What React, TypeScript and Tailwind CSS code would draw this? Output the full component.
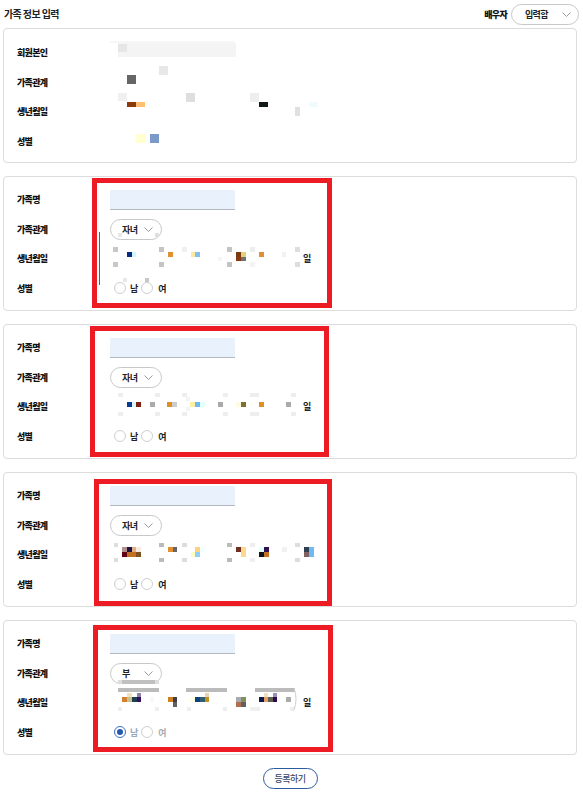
import React from 'react';

type Sq = [number, number, number, number, string];

const FONT = "font-['Noto_Sans_CJK_KR','Noto_Sans',sans-serif]";

const Chevron = () => (
  <svg width="9" height="5" viewBox="0 0 9 5" fill="none">
    <path d="M0.5 0.5 L4.5 4.5 L8.5 0.5" stroke="#9a9a9a" strokeWidth="1" />
  </svg>
);

function Noise({ items, ox, oy }: { items: Sq[]; ox: number; oy: number }) {
  return (
    <>
      {items.map(([x, y, w, h, c], i) => (
        <div
          key={i}
          className="absolute"
          style={{ left: x - ox, top: y - oy, width: w, height: h, background: c }}
        />
      ))}
    </>
  );
}

function Row({ label, children }: { label: string; children?: React.ReactNode }) {
  return (
    <div className="flex h-[29.5px] items-center">
      <div className="w-[93px] text-[9px] font-black leading-none tracking-[-0.7px] text-[#111]">{label}</div>
      <div className="flex flex-1 items-center">{children}</div>
    </div>
  );
}

function Radio({ checked }: { checked?: boolean }) {
  return (
    <div
      className={
        checked
          ? 'flex h-[12px] w-[12px] items-center justify-center rounded-full border border-[#3d6fc0] bg-white'
          : 'h-[12px] w-[12px] rounded-full border border-[#cfcfcf] bg-white'
      }
    >
      {checked && <div className="h-[6px] w-[6px] rounded-full bg-[#2458b0]" />}
    </div>
  );
}

type FamilyProps = {
  top: number;
  rel: string;
  noise: Sq[];
  red: [number, number, number, number];
  showDay: boolean;
  disabledGender?: boolean;
  extra?: React.ReactNode;
};

function FamilyCard({ top, rel, noise, red, showDay, disabledGender, extra }: FamilyProps) {
  const ox = 4;
  const oy = top + 1;
  return (
    <div className="relative h-[135px] w-[574px] rounded-[4px] border border-[#dcdcdc] bg-white">
      <div className="flex flex-col pl-[13px] pt-[8px]">
        <Row label="가족명">
          <div className="h-[20px] w-[125px] border-b border-[#b4b8c0] bg-[#e8f1fc]" />
        </Row>
        <Row label="가족관계">
          <div className="flex h-[21px] w-[52px] items-center justify-between rounded-full border border-[#c8c8c8] pl-[11px] pr-[8px]">
            <span className="text-[9px] font-bold leading-none tracking-[-0.5px] text-[#222]">{rel}</span>
            <Chevron />
          </div>
        </Row>
        <Row label="생년월일">
          {showDay && (
            <span className="ml-[193px] text-[9px] font-bold leading-none text-[#222]">일</span>
          )}
        </Row>
        <Row label="성별">
          <div className="ml-[4px] flex items-center">
            <Radio checked={disabledGender} />
            <span
              className={
                disabledGender
                  ? 'ml-[4px] text-[9px] font-bold leading-none text-[#9aa6bd]'
                  : 'ml-[4px] text-[9px] font-bold leading-none text-[#222]'
              }
            >
              남
            </span>
            <div className="ml-[3px]">
              <Radio />
            </div>
            <span
              className={
                disabledGender
                  ? 'ml-[5px] text-[9px] font-bold leading-none text-[#aaaaaa]'
                  : 'ml-[5px] text-[9px] font-bold leading-none text-[#222]'
              }
            >
              여
            </span>
          </div>
        </Row>
      </div>
      <Noise items={noise} ox={ox} oy={oy} />
      {extra}
      <div
        className="absolute border-[5px] border-[#ed1c24]"
        style={{ left: red[0] - ox, top: red[1] - oy, width: red[2], height: red[3] }}
      />
    </div>
  );
}

const card1Noise: Sq[] = [
  [110, 41, 125, 2, '#f7f7f7'],
  [118, 43, 118, 14, '#f4f4f4'],
  [118, 44, 9, 8, '#e6e6e6'],
  [159, 66, 9, 9, '#e8e8e8'],
  [127, 75, 9, 9, '#666666'],
  [118, 93, 9, 8, '#f0f0f0'],
  [127, 102, 9, 5, '#8b3a0a'],
  [136, 102, 9, 5, '#ffc070'],
  [186, 93, 9, 9, '#dedede'],
  [250, 93, 9, 9, '#eeeeee'],
  [259, 102, 9, 5, '#111a18'],
  [295, 107, 5, 9, '#e0e0e0'],
  [309, 102, 9, 5, '#f0fbff'],
  [136, 134, 9, 9, '#ffffd0'],
  [150, 134, 9, 9, '#7b9ac8'],
];

const card2Noise: Sq[] = [
  [118, 233, 4, 4, '#e8e8e8'],
  [155, 233, 4, 4, '#e0e0e0'],
  [113, 247, 5, 5, '#c8c8c8'],
  [113, 262, 5, 5, '#c8c8c8'],
  [127, 252, 5, 5, '#0a2a80'],
  [132, 252, 4, 5, '#d0f8ff'],
  [159, 247, 5, 5, '#c4c4c4'],
  [159, 262, 5, 5, '#c4c4c4'],
  [168, 252, 5, 5, '#e09030'],
  [182, 247, 5, 5, '#f0f0f0'],
  [191, 252, 4, 5, '#ffe8a0'],
  [195, 252, 5, 5, '#80c0f0'],
  [218, 257, 4, 4, '#f6f6f6'],
  [227, 247, 5, 5, '#c4c4c4'],
  [227, 262, 5, 5, '#c4c4c4'],
  [236, 252, 5, 5, '#7a3a10'],
  [241, 252, 5, 5, '#e0d080'],
  [236, 257, 5, 4, '#8a3a10'],
  [241, 257, 5, 4, '#707070'],
  [250, 247, 5, 5, '#eeeeee'],
  [250, 262, 5, 5, '#f4f4f4'],
  [259, 252, 5, 5, '#e09030'],
  [282, 252, 4, 5, '#f2f2f2'],
  [295, 247, 5, 5, '#dddddd'],
  [295, 262, 5, 5, '#dddddd'],
  [123, 278, 4, 4, '#e8e8e8'],
  [145, 278, 4, 4, '#c8c8c8'],
];

const card3Noise: Sq[] = [
  [118, 393, 5, 4, '#eeeeee'],
  [118, 412, 5, 4, '#eeeeee'],
  [127, 402, 5, 5, '#0a3a90'],
  [132, 402, 4, 5, '#d8f8ff'],
  [136, 402, 5, 5, '#802010'],
  [150, 402, 5, 5, '#aaaaaa'],
  [155, 393, 5, 4, '#eeeeee'],
  [155, 412, 5, 4, '#eeeeee'],
  [167, 402, 5, 5, '#e09020'],
  [172, 402, 5, 5, '#cccccc'],
  [182, 393, 5, 4, '#eeeeee'],
  [182, 412, 5, 4, '#eeeeee'],
  [186, 397, 4, 4, '#f4f4f4'],
  [186, 407, 4, 4, '#f4f4f4'],
  [190, 402, 5, 5, '#fff0a0'],
  [195, 402, 5, 5, '#70b8f0'],
  [200, 402, 5, 5, '#e0ffff'],
  [218, 402, 5, 5, '#aaaaaa'],
  [223, 393, 5, 4, '#eeeeee'],
  [223, 412, 5, 4, '#eeeeee'],
  [236, 402, 5, 5, '#fffbe0'],
  [241, 402, 5, 5, '#807030'],
  [250, 393, 9, 4, '#eeeeee'],
  [250, 412, 9, 4, '#eeeeee'],
  [259, 402, 5, 5, '#e09020'],
  [286, 402, 5, 5, '#aaaaaa'],
  [291, 393, 5, 4, '#eeeeee'],
  [291, 412, 5, 4, '#eeeeee'],
];

const card4Noise: Sq[] = [
  [114, 543, 4, 4, '#dddddd'],
  [114, 558, 4, 4, '#dddddd'],
  [122, 547, 5, 5, '#b09090'],
  [127, 547, 5, 5, '#201040'],
  [132, 547, 4, 5, '#e0b080'],
  [136, 547, 5, 5, '#f8e8e0'],
  [122, 552, 5, 5, '#600010'],
  [127, 552, 5, 5, '#c07020'],
  [132, 552, 4, 5, '#c07020'],
  [136, 552, 5, 5, '#805020'],
  [159, 543, 5, 4, '#bbbbbb'],
  [159, 558, 5, 4, '#bbbbbb'],
  [168, 547, 5, 5, '#e09030'],
  [173, 547, 4, 5, '#666666'],
  [182, 543, 5, 4, '#dddddd'],
  [182, 558, 5, 4, '#dddddd'],
  [195, 547, 5, 5, '#ffd080'],
  [200, 547, 5, 5, '#f0ffff'],
  [191, 552, 4, 5, '#ffffc0'],
  [195, 552, 5, 5, '#90d0f8'],
  [227, 543, 5, 4, '#bbbbbb'],
  [227, 558, 5, 4, '#bbbbbb'],
  [236, 547, 5, 5, '#703020'],
  [241, 547, 5, 10, '#ffd890'],
  [250, 543, 5, 4, '#eeeeee'],
  [250, 558, 5, 4, '#eeeeee'],
  [259, 547, 5, 5, '#e0ffff'],
  [264, 547, 5, 5, '#301050'],
  [259, 552, 5, 5, '#101020'],
  [264, 552, 5, 5, '#c07020'],
  [282, 547, 5, 5, '#f0f0f0'],
  [295, 543, 5, 4, '#dddddd'],
  [295, 558, 5, 4, '#dddddd'],
  [304, 547, 5, 5, '#304050'],
  [304, 552, 5, 5, '#806060'],
  [309, 547, 5, 10, '#70b8f0'],
];

const card5Noise: Sq[] = [
  [118, 680, 4, 4, '#dddddd'],
  [122, 680, 33, 4, '#c0c0c0'],
  [155, 680, 4, 4, '#dddddd'],
  [118, 688, 41, 4, '#bbbbbb'],
  [186, 688, 41, 4, '#bbbbbb'],
  [255, 688, 40, 4, '#bbbbbb'],
  [127, 693, 5, 4, '#f0e0c0'],
  [137, 693, 4, 4, '#9080b0'],
  [205, 693, 4, 4, '#f0d0b0'],
  [264, 693, 4, 4, '#f0e0c0'],
  [273, 693, 4, 4, '#a090c0'],
  [122, 697, 5, 5, '#d08030'],
  [127, 697, 5, 5, '#c8c090'],
  [132, 697, 5, 5, '#204050'],
  [137, 697, 4, 5, '#301060'],
  [150, 697, 4, 5, '#f8f8f8'],
  [168, 697, 5, 5, '#d08020'],
  [173, 697, 4, 5, '#404040'],
  [173, 702, 4, 5, '#606060'],
  [190, 697, 5, 5, '#ffffe8'],
  [195, 697, 5, 5, '#104080'],
  [200, 697, 5, 5, '#306070'],
  [205, 697, 4, 5, '#c09020'],
  [236, 697, 5, 5, '#aaaaaa'],
  [241, 697, 5, 5, '#809060'],
  [236, 702, 5, 5, '#b07050'],
  [241, 702, 5, 5, '#606060'],
  [259, 697, 5, 5, '#101850'],
  [264, 697, 4, 5, '#e0a060'],
  [268, 697, 5, 5, '#606050'],
  [273, 697, 4, 5, '#300850'],
  [286, 697, 5, 5, '#aaaaaa'],
  [118, 707, 4, 4, '#eeeeee'],
  [155, 707, 4, 4, '#eeeeee'],
  [187, 707, 4, 4, '#eeeeee'],
  [223, 707, 4, 4, '#eeeeee'],
  [250, 707, 10, 4, '#f0f0f0'],
  [290, 707, 4, 4, '#eeeeee'],
];

export default function App() {
  return (
    <div className={`h-[802px] w-[583px] bg-white ${FONT}`}>
      <div className="flex h-[28px] items-center justify-between pl-[4px] pr-[4px]">
        <span className="text-[10px] font-bold leading-none tracking-[-0.6px] text-[#222]">가족 정보 입력</span>
        <div className="flex items-center">
          <span className="text-[9px] font-black leading-none tracking-[-0.7px] text-[#111]">배우자</span>
          <div className="ml-[4px] flex h-[21px] w-[68px] items-center justify-between rounded-full border border-[#c8c8c8] pl-[13px] pr-[7px]">
            <span className="text-[9px] font-bold leading-none tracking-[-0.7px] text-[#222]">입력함</span>
            <Chevron />
          </div>
        </div>
      </div>

      <div className="ml-[3px] flex flex-col gap-[13px]">
        <div className="relative h-[135px] w-[574px] rounded-[4px] border border-[#dcdcdc] bg-white">
          <div className="flex flex-col pl-[13px] pt-[9px]">
            <Row label="회원본인" />
            <Row label="가족관계" />
            <Row label="생년월일" />
            <Row label="성별" />
          </div>
          <Noise items={card1Noise} ox={4} oy={29} />
        </div>

        <FamilyCard
          top={176}
          rel="자녀"
          noise={card2Noise}
          red={[92, 178, 240, 130]}
          showDay
          extra={
            <div className="absolute h-[53px] w-[1px] bg-[#c83030]" style={{ left: 99 - 4, top: 232 - 177 }} />
          }
        />
        <FamilyCard top={324} rel="자녀" noise={card3Noise} red={[90, 326, 239, 131]} showDay />
        <FamilyCard top={472} rel="자녀" noise={card4Noise} red={[94, 479, 238, 127]} showDay={false} />
        <FamilyCard
          top={620}
          rel="부"
          noise={card5Noise}
          red={[93, 625, 240, 127]}
          showDay
          disabledGender
          extra={
            <svg className="absolute" style={{ left: 293 - 4, top: 687 - 621 }} width="6" height="24" viewBox="0 0 6 24" fill="none">
              <path d="M1 1 Q5 12 1 23" stroke="#cfcfcf" strokeWidth="1" />
            </svg>
          }
        />
      </div>

      <div className="mt-[13px] flex justify-center">
        <button className="ml-[-3px] flex h-[21px] w-[55px] items-center justify-center rounded-full border-[1.5px] border-[#2c5aa0] bg-white text-[9px] font-medium leading-none tracking-[-0.5px] text-[#3a4a6a]">
          등록하기
        </button>
      </div>
    </div>
  );
}
